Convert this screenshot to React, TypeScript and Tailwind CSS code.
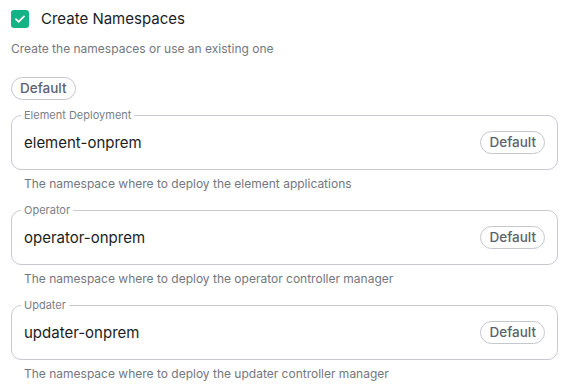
import React from 'react';

const namespaces = [
  { label: 'Element Deployment', value: 'element-onprem', help: 'The namespace where to deploy the element applications' },
  { label: 'Operator', value: 'operator-onprem', help: 'The namespace where to deploy the operator controller manager' },
  { label: 'Updater', value: 'updater-onprem', help: 'The namespace where to deploy the updater controller manager' },
];

function DefaultChip() {
  return (
    <button className="h-[23px] px-[8px] rounded-full border border-[#c4c7cd] bg-white text-[13.5px] font-medium text-[#5b6370] leading-none">
      Default
    </button>
  );
}

export default function App() {
  return (
    <div className="w-[565px] h-[387px] bg-white pl-[11px] pr-[7px] pt-[9px] font-['Inter',sans-serif] overflow-hidden">
      {/* Header */}
      <div className="flex items-center h-[20px]">
        <span className="w-[18px] h-[18px] rounded-[3px] bg-[#13b385] flex items-center justify-center">
          <svg width="12" height="12" viewBox="0 0 12 12" fill="none">
            <path d="M2 6.2l2.6 2.6L10 3.4" stroke="white" strokeWidth="1.8" strokeLinecap="round" strokeLinejoin="round" />
          </svg>
        </span>
        <span className="ml-[12px] text-[15px] text-[#1b1d22]">Create Namespaces</span>
      </div>
      <p className="mt-[12px] text-[12px] leading-[16px] text-[#737780]">
        Create the namespaces or use an existing one
      </p>
      <div className="mt-[18px]">
        <DefaultChip />
      </div>

      {/* Namespace fields */}
      <div className="mt-[8px] flex flex-col gap-[11px]">
        {namespaces.map((ns) => (
          <div key={ns.label}>
            <fieldset className="border border-[#c8cacf] rounded-[10px] px-[12px] pt-[9px] pb-[15px]">
              <legend className="ml-[-3px] px-[3px] text-[11px] leading-[14px] text-[#7a7f88]">
                {ns.label}
              </legend>
              <div className="flex items-center justify-between h-[23px]">
                <span className="text-[15px] text-[#1b1d22]">{ns.value}</span>
                <DefaultChip />
              </div>
            </fieldset>
            <p className="mt-[6px] pl-[13px] text-[12px] leading-[16px] text-[#737780]">{ns.help}</p>
          </div>
        ))}
      </div>
    </div>
  );
}
